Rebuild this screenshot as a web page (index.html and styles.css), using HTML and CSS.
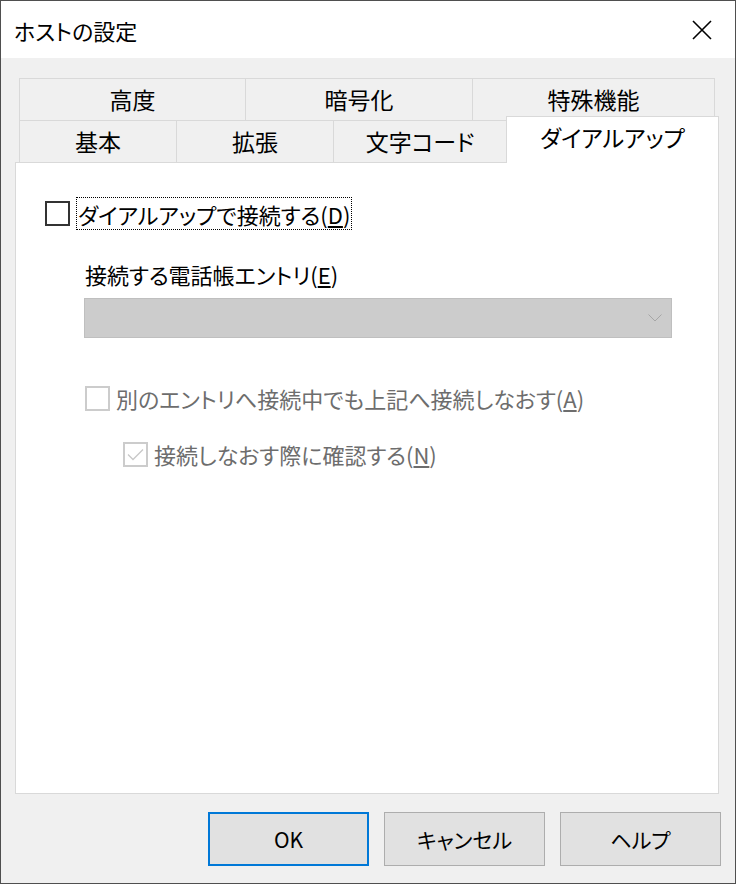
FILE: index.html
```html
<!DOCTYPE html>
<html lang="ja">
<head>
    <meta charset="UTF-8">
    <title>ホストの設定</title>
    <link rel="stylesheet" href="styles.css">
</head>
<body>
    <div class="window">
        <div class="titlebar">
            <span class="title">ホストの設定</span>
            <svg class="close" width="20" height="20" viewBox="0 0 20 20">
                <path d="M1 1 L19 19 M19 1 L1 19" stroke="#000" stroke-width="1.6" fill="none"/>
            </svg>
        </div>
        <div class="dialog">
            <div class="tabs">
                <div class="tab-row row-back">
                    <div class="tab">高度</div>
                    <div class="tab">暗号化</div>
                    <div class="tab">特殊機能</div>
                </div>
                <div class="tab-row row-front">
                    <div class="tab">基本</div>
                    <div class="tab">拡張</div>
                    <div class="tab">文字コード</div>
                    <div class="tab selected">ダイアルアップ</div>
                </div>
            </div>
            <div class="panel">
                <div class="dial-row">
                    <span class="check"></span>
                    <span class="focus">ダイアルアップで接続する(<u>D</u>)</span>
                </div>
                <div class="entry-label">接続する電話帳エントリ(<u>E</u>)</div>
                <div class="combo">
                    <svg width="14" height="8" viewBox="0 0 14 8">
                        <path d="M0.5 0.5 L7 7 L13.5 0.5" stroke="#a6a6a6" stroke-width="1" fill="none"/>
                    </svg>
                </div>
                <div class="opt opt-reconnect">
                    <span class="check disabled"></span>
                    <span>別のエントリへ接続中でも上記へ接続しなおす(<u>A</u>)</span>
                </div>
                <div class="opt opt-confirm">
                    <span class="check disabled">
                        <svg width="21" height="21" viewBox="0 0 21 21">
                            <path d="M3 10.5 L8 15.5 L18 5.5" stroke="#c8c8c8" stroke-width="1.3" fill="none"/>
                        </svg>
                    </span>
                    <span>接続しなおす際に確認する(<u>N</u>)</span>
                </div>
            </div>
            <div class="buttons">
                <button class="btn default">OK</button>
                <button class="btn">キャンセル</button>
                <button class="btn">ヘルプ</button>
            </div>
        </div>
    </div>
</body>
</html>
```

FILE: styles.css
```css
body {
    margin: 0;
    padding: 0;
    font-family: "Noto Sans CJK JP", "Noto Sans", sans-serif;
    font-feature-settings: "palt";
    color: #000;
    background-color: #5c5c5c;
}
.window {
    width: 736px;
    height: 884px;
    box-sizing: border-box;
    border: 1px solid #4f4f4f;
    background-color: #f0f0f0;
    display: flex;
    flex-direction: column;
}
.titlebar {
    height: 57px;
    background-color: #fff;
    display: flex;
    align-items: center;
    justify-content: space-between;
    padding: 0 23px 0 13px;
}
.title {
    font-size: 22px;
}
.dialog {
    flex: 1;
    display: flex;
    flex-direction: column;
}

/* Tabs */
.tabs {
    margin: 20px 0 0 18px;
}
.tab-row {
    display: flex;
    align-items: flex-start;
}
.tab {
    box-sizing: border-box;
    height: 42px;
    border: 1px solid #d9d9d9;
    border-bottom: none;
    background-color: #f0f0f0;
    font-size: 23px;
    display: flex;
    align-items: center;
    justify-content: center;
    padding-bottom: 2px;
}
.tab + .tab {
    margin-left: -1px;
}
.row-back .tab:nth-child(1) { width: 227px; }
.row-back .tab:nth-child(2) { width: 228px; }
.row-back .tab:nth-child(3) { width: 243px; }
.row-front .tab:nth-child(1) { width: 158px; }
.row-front .tab:nth-child(2) { width: 158px; }
.row-front .tab:nth-child(3) { width: 174px; }
.tab.selected {
    width: 213px;
    height: 47px;
    margin-top: -4px;
    margin-bottom: -1px;
    padding-bottom: 6px;
    background-color: #fff;
    position: relative;
    z-index: 1;
}

/* Panel */
.panel {
    margin-left: 14px;
    width: 704px;
    height: 632px;
    box-sizing: border-box;
    border: 1px solid #d9d9d9;
    background-color: #fff;
    font-size: 22px;
}
.check {
    box-sizing: border-box;
    width: 25px;
    height: 25px;
    border: 2px solid #333;
    display: inline-flex;
    align-items: center;
    justify-content: center;
    flex-shrink: 0;
}
.check.disabled {
    border-color: #cccccc;
}
.dial-row {
    display: flex;
    align-items: center;
    margin: 34px 0 0 29px;
    height: 33px;
}
.focus {
    margin-left: 6px;
    border: 1px dotted #000;
    height: 33px;
    box-sizing: border-box;
    padding: 0 1px;
    display: flex;
    align-items: center;
}
.entry-label {
    margin: 29px 0 0 69px;
    line-height: 30px;
}
.combo {
    margin: 9px 0 0 68px;
    width: 588px;
    height: 40px;
    box-sizing: border-box;
    border: 1px solid #bfbfbf;
    background-color: #cccccc;
    display: flex;
    align-items: center;
    justify-content: flex-end;
    padding-right: 9px;
}
.opt {
    display: flex;
    align-items: center;
    height: 30px;
    color: #6d6d6d;
}
.opt .check {
    margin-right: 6px;
}
.opt-reconnect {
    margin: 45px 0 0 69px;
}
.opt-confirm {
    margin: 26px 0 0 107px;
}

/* Buttons */
.buttons {
    display: flex;
    gap: 15px;
    margin: 18px 0 0 207px;
}
.btn {
    width: 161px;
    height: 54px;
    box-sizing: border-box;
    border: 1px solid #adadad;
    background-color: #e1e1e1;
    font-family: "Noto Sans CJK JP", "Noto Sans", sans-serif;
    font-feature-settings: "palt";
    font-size: 21px;
    color: #000;
    padding: 0;
}
.btn.default {
    border: 2px solid #0078d7;
}
```
